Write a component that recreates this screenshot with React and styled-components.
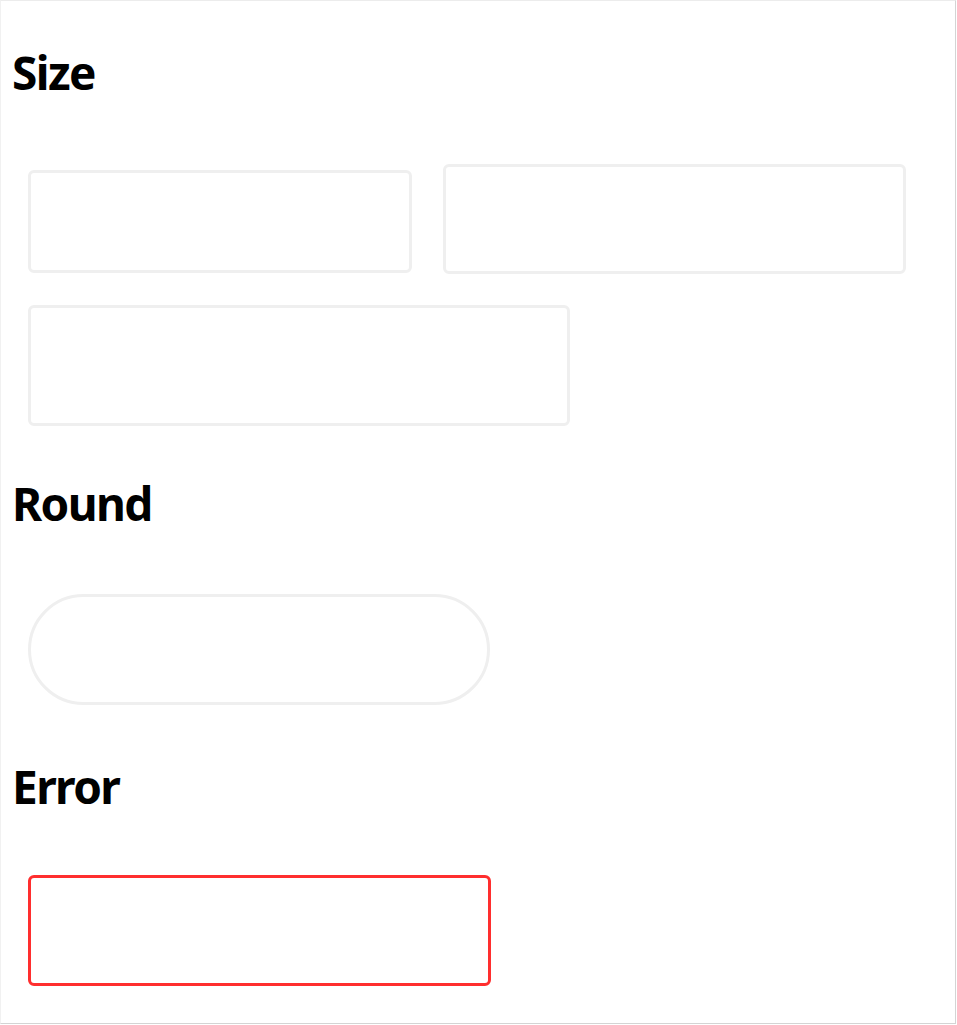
import React from "react";
import styled, { createGlobalStyle } from "styled-components";

const GlobalStyle = createGlobalStyle`
  html, body {
    margin: 0;
    padding: 0;
    background: #ffffff;
  }
  * {
    box-sizing: border-box;
  }
`;

export default function App() {
  return (
    <>
      <GlobalStyle />
      <Frame>
        <Section>
          <Title $top={43}>Size</Title>
          <Fields $top={64}>
            <Input $w={384} $h={103} style={{ marginBottom: 1 }} />
            <Input $w={463} $h={110} />
            <Input $w={542} $h={121} />
          </Fields>
        </Section>
        <Section>
          <Title $top={49}>Round</Title>
          <Fields $top={63}>
            <Input $w={462} $h={111} $round />
          </Fields>
        </Section>
        <Section>
          <Title $top={53}>Error</Title>
          <Fields $top={61}>
            <Input $w={463} $h={111} $error />
          </Fields>
        </Section>
      </Frame>
    </>
  );
}

// --------------------------css

const Frame = styled.div`
  width: 956px;
  height: 1024px;
  border-top: 1px solid #ececec;
  border-left: 1px solid #f1f1f1;
  border-right: 1px solid #d4d4d4;
  border-bottom: 1px solid #d4d4d4;
  background: #ffffff;
  display: flex;
  flex-direction: column;
  overflow: hidden;
`;

const Section = styled.section`
  display: flex;
  flex-direction: column;
`;

const Title = styled.h2`
  margin: ${(props) => props.$top}px 0 0 11px;
  font-family: "Noto Sans", "Open Sans", sans-serif;
  font-size: 46px;
  line-height: 56px;
  font-weight: 700;
  letter-spacing: -1.6px;
  color: #000000;
`;

const Fields = styled.div`
  margin-top: ${(props) => props.$top}px;
  padding-left: 27px;
  display: flex;
  flex-wrap: wrap;
  align-items: flex-end;
  gap: 31px;
`;

const Input = styled.input`
  display: block;
  width: ${(props) => props.$w}px;
  height: ${(props) => props.$h}px;
  padding: 0 16px;
  border: 3px solid ${(props) => (props.$error ? "#ff2e2e" : "#efefef")};
  border-radius: ${(props) => (props.$round ? "999px" : "6px")};
  background: #ffffff;
  outline: none;
  font-family: "Noto Sans", sans-serif;
  font-size: 18px;
`;
